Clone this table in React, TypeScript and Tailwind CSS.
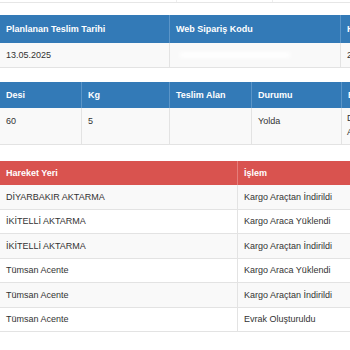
import React from "react";

const font = { fontFamily: '"Liberation Sans", Arial, sans-serif' };

export default function App() {
  const moves = [
    ["DİYARBAKIR AKTARMA", "Kargo Araçtan İndirildi", "h-[25px]"],
    ["İKİTELLİ AKTARMA", "Kargo Araca Yüklendi", "h-[24px]"],
    ["İKİTELLİ AKTARMA", "Kargo Araçtan İndirildi", "h-[25px]"],
    ["Tümsan Acente", "Kargo Araca Yüklendi", "h-[24px]"],
    ["Tümsan Acente", "Kargo Araçtan İndirildi", "h-[25px]"],
    ["Tümsan Acente", "Evrak Oluşturuldu", "h-[24px]"],
  ];
  return (
    <div className="w-[350px] h-[350px] overflow-hidden bg-white text-[9px] text-[#333] leading-[13px]" style={font}>
      {/* previous table bottom */}
      <div className="grid grid-cols-[177px_96px_1fr] h-[3px] border-b border-[#e6e6e6]">
        <div className="border-r border-[#eee]" />
        <div className="border-r border-[#eee]" />
        <div />
      </div>

      {/* table 1 */}
      <div className="mt-[12px] w-[360px]">
        <div className="grid grid-cols-[170px_171px_1fr] h-[28px] bg-[#337ab7] text-white font-bold">
          <div className="px-[6px] flex items-center border-r border-[#5b95c8]">Planlanan Teslim Tarihi</div>
          <div className="px-[6px] flex items-center border-r border-[#5b95c8]">Web Sipariş Kodu</div>
          <div className="px-[6px] flex items-center">Hedef</div>
        </div>
        <div className="grid grid-cols-[170px_171px_1fr] h-[25px] bg-[#f9f9f9] border-b border-[#e3e3e3]">
          <div className="px-[6px] flex items-center border-r border-[#e3e3e3]">13.05.2025</div>
          <div className="px-[6px] flex items-center border-r border-[#e3e3e3] relative">
            <div className="absolute left-[10px] top-[9px] w-[110px] h-[6px] bg-white blur-[2px]" />
          </div>
          <div className="px-[6px] flex items-center">2</div>
        </div>
      </div>

      {/* table 2 */}
      <div className="mt-[14px] w-[380px]">
        <div className="grid grid-cols-[82px_88px_82px_90px_1fr] h-[26px] bg-[#337ab7] text-white font-bold">
          <div className="px-[6px] flex items-center border-r border-[#5b95c8]">Desi</div>
          <div className="px-[6px] flex items-center border-r border-[#5b95c8]">Kg</div>
          <div className="px-[6px] flex items-center border-r border-[#5b95c8]">Teslim Alan</div>
          <div className="px-[6px] flex items-center border-r border-[#5b95c8]">Durumu</div>
          <div className="px-[6px] flex items-center">Birim</div>
        </div>
        <div className="grid grid-cols-[82px_88px_82px_90px_1fr] h-[37px] bg-[#f9f9f9] border-b border-[#e3e3e3]">
          <div className="px-[6px] pt-[7px] border-r border-[#e3e3e3]">60</div>
          <div className="px-[6px] pt-[7px] border-r border-[#e3e3e3]">5</div>
          <div className="px-[6px] pt-[7px] border-r border-[#e3e3e3]" />
          <div className="px-[6px] pt-[7px] border-r border-[#e3e3e3]">Yolda</div>
          <div className="px-[5px] pt-[3px] leading-[14px]">
            <div>D</div>
            <div>A</div>
          </div>
        </div>
      </div>

      {/* table 3 */}
      <div className="mt-[16px] w-[350px]">
        <div className="grid grid-cols-[238px_1fr] h-[24px] bg-[#d9534f] text-white font-bold">
          <div className="px-[6px] flex items-center border-r border-[#e57e7b]">Hareket Yeri</div>
          <div className="px-[6px] flex items-center">İşlem</div>
        </div>
        {moves.map(([a, b, h], i) => (
          <div
            key={i}
            className={
              "grid grid-cols-[238px_1fr] border-b border-[#e3e3e3] " +
              h +
              " " +
              (i % 2 === 0 ? "bg-[#f9f9f9]" : "bg-white")
            }
          >
            <div className="px-[6px] flex items-center border-r border-[#e3e3e3]">{a}</div>
            <div className="px-[6px] flex items-center">{b}</div>
          </div>
        ))}
      </div>
    </div>
  );
}
